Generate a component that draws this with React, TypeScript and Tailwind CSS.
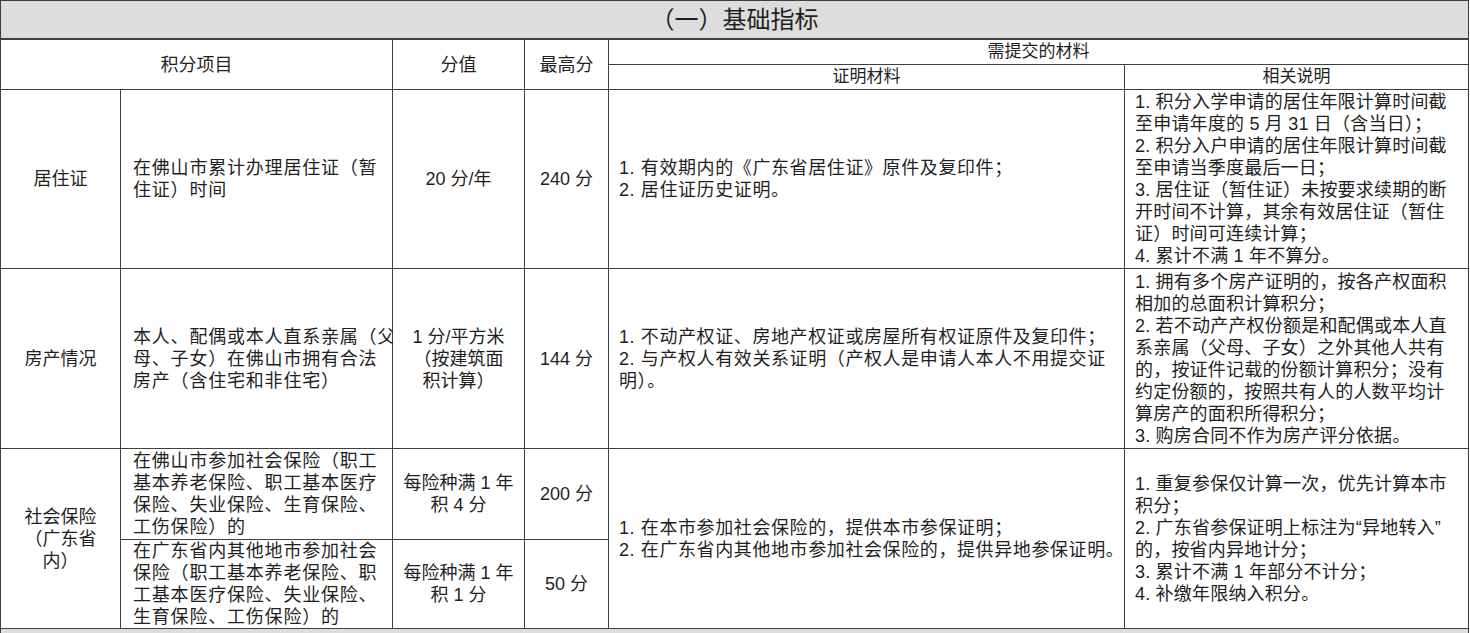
import React from 'react';

const cell = 'bg-white flex flex-col justify-center';
const center = `${cell} items-center text-center`;
const left = `${cell} items-start pl-[12px] pr-[6px]`;

const Lines: React.FC<{ lines: string[]; className?: string }> = ({ lines, className }) => (
  <>
    {lines.map((l, i) => (
      <div key={i} className={`whitespace-nowrap ${className ?? ''}`}>
        {l}
      </div>
    ))}
  </>
);

export default function App() {
  return (
    <div
      className="w-[1470px] h-[633px] overflow-hidden bg-white text-[18px] leading-[22px] text-[#1f1f1f]"
      style={{ fontFamily: '"Liberation Sans", "Noto Sans CJK SC", sans-serif' }}
    >
      <div className="grid w-[1469px] grid-cols-[119px_271px_131px_83px_515px_343px] grid-rows-[38px_24px_24px_178px_179px_90px_88px_40px] gap-px bg-[#404040] p-px">
        {/* title */}
        <div className="col-span-6 flex items-center justify-center bg-[#dcdddc] text-[24px] border-b border-[#404040]">
          （一）基础指标
        </div>

        {/* header */}
        <div className={`${center} col-span-2 row-span-2`}>积分项目</div>
        <div className={`${center} row-span-2`}>分值</div>
        <div className={`${center} row-span-2`}>最高分</div>
        <div className={`${center} col-span-2 text-[17px]`}>需提交的材料</div>
        <div className={`${center} text-[17px]`}>证明材料</div>
        <div className={`${center} text-[17px]`}>相关说明</div>

        {/* 居住证 */}
        <div className={center}>居住证</div>
        <div className={`${left} tracking-[0.8px]`}>
          <Lines lines={['在佛山市累计办理居住证（暂', '住证）时间']} />
        </div>
        <div className={center}>20 分/年</div>
        <div className={center}>240 分</div>
        <div className={`${cell} pl-[10px] tracking-[0.6px]`}>
          <Lines lines={['1. 有效期内的《广东省居住证》原件及复印件；', '2. 居住证历史证明。']} />
        </div>
        <div className={`${cell} pl-[10px] tracking-[0.2px]`}>
          <Lines
            lines={[
              '1. 积分入学申请的居住年限计算时间截',
              '至申请年度的 5 月 31 日（含当日）；',
              '2. 积分入户申请的居住年限计算时间截',
              '至申请当季度最后一日；',
              '3. 居住证（暂住证）未按要求续期的断',
              '开时间不计算，其余有效居住证（暂住',
              '证）时间可连续计算；',
              '4. 累计不满 1 年不算分。',
            ]}
          />
        </div>

        {/* 房产情况 */}
        <div className={center}>房产情况</div>
        <div className={`${left} tracking-[0.8px]`}>
          <Lines lines={['本人、配偶或本人直系亲属（父', '母、子女）在佛山市拥有合法', '房产（含住宅和非住宅）']} />
        </div>
        <div className={center}>
          <Lines lines={['1 分/平方米', '（按建筑面', '积计算）']} />
        </div>
        <div className={center}>144 分</div>
        <div className={`${cell} pl-[10px] tracking-[0.6px]`}>
          <Lines
            lines={[
              '1. 不动产权证、房地产权证或房屋所有权证原件及复印件；',
              '2. 与产权人有效关系证明（产权人是申请人本人不用提交证',
              '明）。',
            ]}
          />
        </div>
        <div className={`${cell} pl-[10px] tracking-[0.2px]`}>
          <Lines
            lines={[
              '1. 拥有多个房产证明的，按各产权面积',
              '相加的总面积计算积分；',
              '2. 若不动产产权份额是和配偶或本人直',
              '系亲属（父母、子女）之外其他人共有',
              '的，按证件记载的份额计算积分；没有',
              '约定份额的，按照共有人的人数平均计',
              '算房产的面积所得积分；',
              '3. 购房合同不作为房产评分依据。',
            ]}
          />
        </div>

        {/* 社会保险 */}
        <div className={`${center} row-span-2`}>
          <Lines lines={['社会保险', '（广东省', '内）']} />
        </div>
        <div className={`${left} tracking-[0.8px]`}>
          <Lines lines={['在佛山市参加社会保险（职工', '基本养老保险、职工基本医疗', '保险、失业保险、生育保险、', '工伤保险）的']} />
        </div>
        <div className={center}>
          <Lines lines={['每险种满 1 年', '积 4 分']} />
        </div>
        <div className={center}>200 分</div>
        <div className={`${cell} row-span-2 pl-[10px] tracking-[0.6px]`}>
          <Lines
            lines={[
              '1. 在本市参加社会保险的，提供本市参保证明；',
              '2. 在广东省内其他地市参加社会保险的，提供异地参保证明。',
            ]}
          />
        </div>
        <div className={`${cell} row-span-2 pl-[10px] tracking-[0.2px]`}>
          <Lines
            lines={[
              '1. 重复参保仅计算一次，优先计算本市',
              '积分；',
              '2. 广东省参保证明上标注为“异地转入”',
              '的，按省内异地计分；',
              '3. 累计不满 1 年部分不计分；',
              '4. 补缴年限纳入积分。',
            ]}
          />
        </div>
        <div className={`${left} tracking-[0.8px]`}>
          <Lines lines={['在广东省内其他地市参加社会', '保险（职工基本养老保险、职', '工基本医疗保险、失业保险、', '生育保险、工伤保险）的']} />
        </div>
        <div className={center}>
          <Lines lines={['每险种满 1 年', '积 1 分']} />
        </div>
        <div className={center}>50 分</div>

        {/* next section bar */}
        <div className="col-span-6 bg-[#dcdddc]" />
      </div>
    </div>
  );
}
